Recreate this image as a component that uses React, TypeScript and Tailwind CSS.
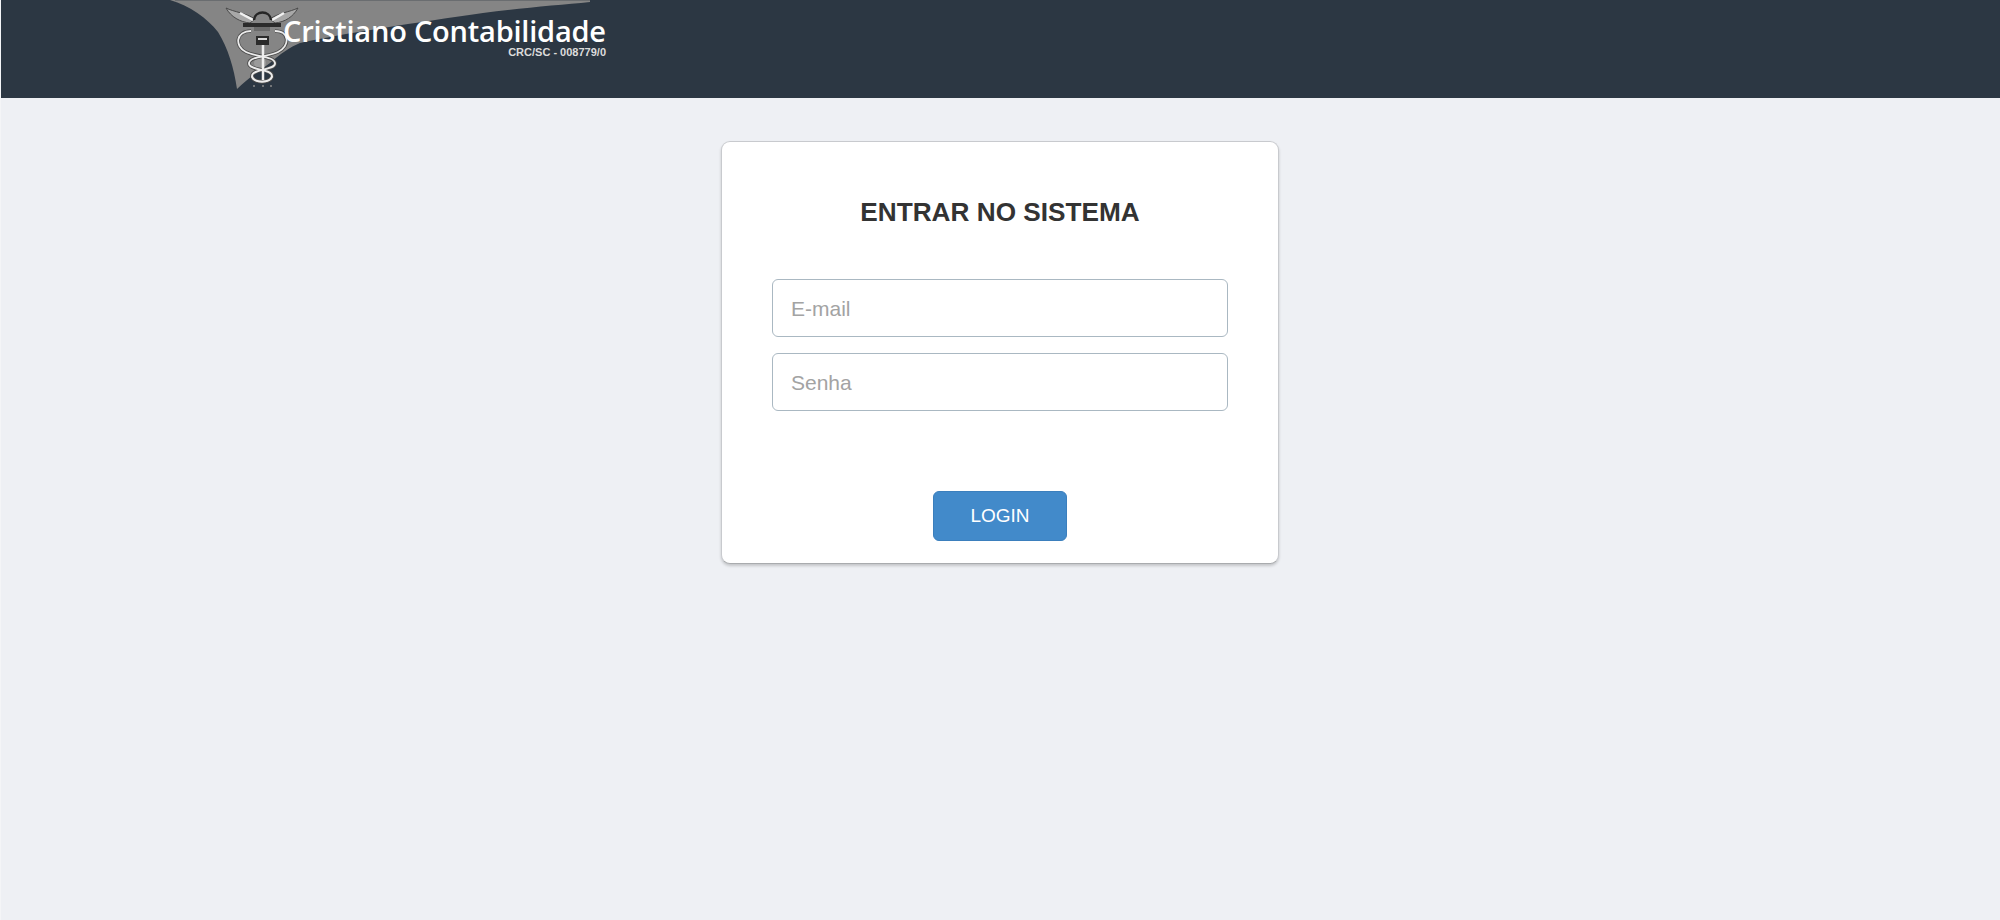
import React from 'react'

const snakeA = 'M251 31 C236 31 234 46 246 52 C256 57 274 56 275 63 C276 71 252 68 252 76 C252 83 271 84 272 76'
const snakeB = 'M275 31 C290 31 290 46 278 52 C268 57 250 56 249 63 C248 71 272 68 272 76 C272 83 253 84 252 76'

const Logo = () => (
  <svg aria-hidden="true" viewBox="160 0 460 98" className="absolute left-0 top-0 h-[98px] w-[460px]">
    <path
      d="M170 0 C190 6 207 18 218 32 C228 48 234 68 237 89 C246 80 258 72 270 63 C280 54 290 47 300 43 C340 34 420 22 483 13 C520 8 560 5 590 2 L590 0 Z"
      fill="#858585"
    />
    <path d="M175 0 H590" stroke="#6a6d70" strokeWidth="2" />
    {/* wings */}
    <path d="M226 8 C234 12 246 13 255 19 L250 23 C240 22 231 17 226 8 Z" fill="#a8a8a8" stroke="#4a4a4a" strokeWidth="1" />
    <path d="M298 8 C290 12 278 13 270 19 L275 23 C285 22 293 17 298 8 Z" fill="#a8a8a8" stroke="#4a4a4a" strokeWidth="1" />
    <path d="M240 13 L253 20 M284 13 L272 20" stroke="#f2f2f2" strokeWidth="2.5" />
    {/* helmet and bar */}
    <path d="M254 20 C255 10 270 10 271 20" fill="none" stroke="#262626" strokeWidth="2.5" />
    <rect x="243" y="23" width="38" height="4" fill="#2b2b2b" />
    <rect x="254" y="27" width="16" height="4" fill="#6a6a6a" />
    <rect x="256" y="36" width="13" height="9" fill="#2b2b2b" />
    <rect x="258" y="38" width="9" height="2" fill="#d8d8d8" />
    {/* snakes */}
    <circle cx="260" cy="63" r="6" fill="#9a9a9a" />
    <g fill="none" stroke="#4d4d4d" strokeWidth="3.6">
      <path d={snakeA} />
      <path d={snakeB} />
    </g>
    <g fill="none" stroke="#ececec" strokeWidth="1.8">
      <path d={snakeA} />
      <path d={snakeB} />
    </g>
    {/* staff */}
    <path d="M263 45 V80" stroke="#eeeeee" strokeWidth="2.5" />
    <path d="M254 85 V87 M263 85 V87 M271 85 V87" stroke="#8a8a8a" strokeWidth="1.5" />
  </svg>
)

const App = () => {
  return (
    <div className="flex min-h-[920px] flex-col border-l border-[#f4f5f7] bg-[#eef0f4] font-['Liberation_Sans',Arial,sans-serif]">
      <header className="h-[98px] bg-[#2c3743] pl-[159px]">
        <div className="relative h-[98px] w-[460px]">
          <Logo />
          <div className="absolute left-[123px] top-[11px] whitespace-nowrap font-['Open_Sans',sans-serif] text-[29px] leading-[40px] font-semibold tracking-[-0.22px] text-white">
            Cristiano Contabilidade
          </div>
          <div className="absolute right-[14px] top-[46px] whitespace-nowrap text-[11px] leading-[12px] font-bold text-[#dcdcdc]">
            CRC/SC - 008779/0
          </div>
        </div>
      </header>
      <main className="flex flex-1 justify-center pt-[43px] pr-px">
        <div className="flex h-[423px] w-[558px] flex-col rounded-[9px] border border-[#c8cace] border-b-[#a9abae] bg-white px-[50px] pt-[52px] shadow-[0_2px_3px_rgba(0,0,0,0.18)]">
          <h1 className="text-center text-[26.2px] leading-[36px] font-bold text-[#333333]">ENTRAR NO SISTEMA</h1>
          <form className="mt-[49px] flex flex-col gap-[16px]">
            <input
              type="text"
              placeholder="E-mail"
              className="h-[58px] w-full rounded-[6px] border border-[#aab8c2] bg-white px-[18px] pt-[2px] text-[21px] text-[#333333] placeholder:text-[#a3a3a3]"
            />
            <input
              type="password"
              placeholder="Senha"
              className="h-[58px] w-full rounded-[6px] border border-[#aab8c2] bg-white px-[18px] pt-[2px] text-[21px] text-[#333333] placeholder:text-[#a3a3a3]"
            />
            <div className="mt-[64px] flex justify-center">
              <button
                type="button"
                className="h-[50px] w-[134px] rounded-[6px] border border-[#3b7fbd] bg-[#428aca] text-[19px] text-white"
              >
                LOGIN
              </button>
            </div>
          </form>
        </div>
      </main>
    </div>
  )
}

export default App
